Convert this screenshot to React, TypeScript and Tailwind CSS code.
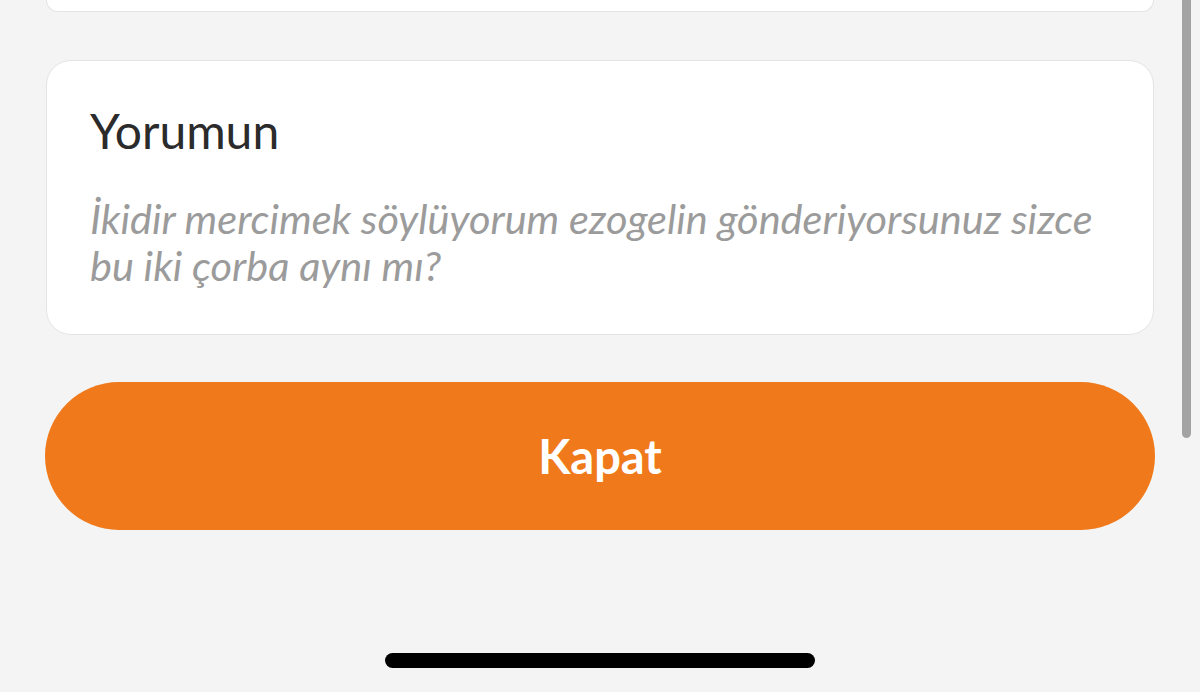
import React from "react";

export default function App() {
  return (
    <div
      className="relative w-[1200px] h-[692px] overflow-hidden bg-[#f4f4f4]"
      style={{ fontFamily: "Lato, 'Noto Sans', sans-serif" }}
    >
      <div className="flex flex-col px-[46px]">
        <div className="h-[12px] rounded-b-[24px] border border-t-0 border-[#e4e4e4] bg-white" />
        <div className="mt-[48px] h-[275px] rounded-[25px] border border-[#e4e4e4] bg-white pl-[43px] pr-[30px] pt-[44px]">
          <div className="text-[48px] leading-[52px] text-[#2b2b2b]">Yorumun</div>
          <div className="mt-[38px] text-[41.5px] leading-[47px] italic text-[#9b9b9b]">
            İkidir mercimek söylüyorum ezogelin gönderiyorsunuz sizce bu iki çorba aynı mı?
          </div>
        </div>
        <button className="mt-[47px] h-[148px] -mx-px w-[1110px] rounded-full bg-[#f07a1b] text-[47px] font-bold text-white">
          Kapat
        </button>
      </div>
      <div className="absolute left-[1182px] top-0 h-[438px] w-[9px] rounded-b-full bg-[#a3a3a3]" />
      <div className="absolute left-[385px] top-[653px] h-[15px] w-[430px] rounded-full bg-black" />
    </div>
  );
}
